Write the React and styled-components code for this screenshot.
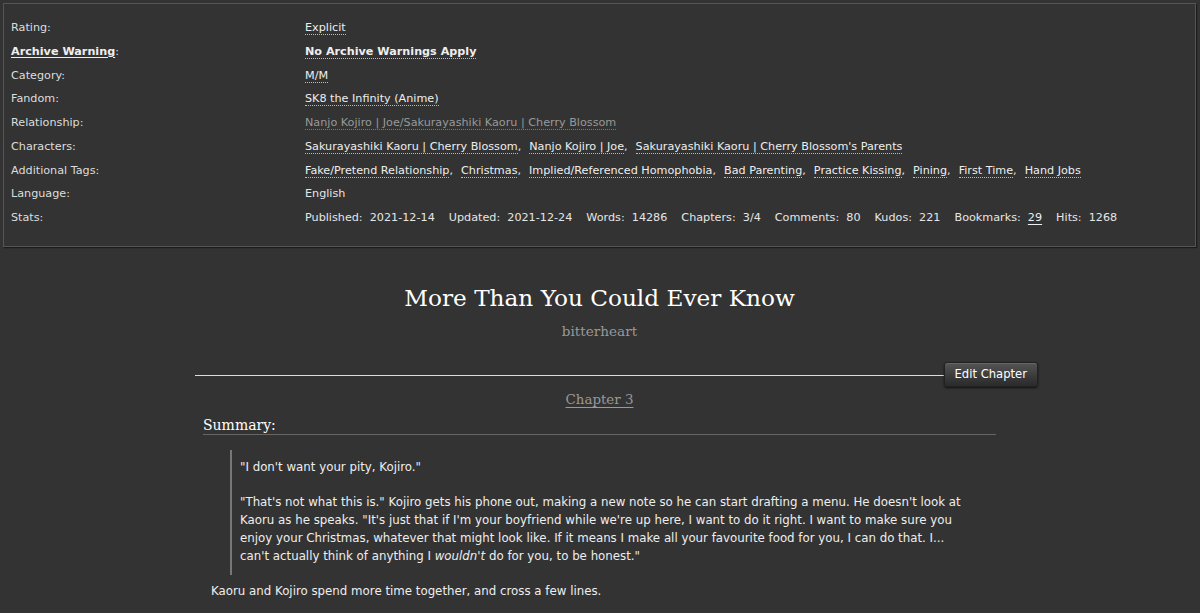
import React from "react";
import styled, { createGlobalStyle } from "styled-components";

const Global = createGlobalStyle`
  html, body { margin: 0; padding: 0; background: #333; }
  body { font-family: "DejaVu Sans", "Noto Sans", sans-serif; color: #ddd; }
  * { box-sizing: border-box; }
`;

const Page = styled.div`
  width: 1200px;
  height: 613px;
  overflow: hidden;
  padding: 3px 4px 0 3px;
`;

const MetaBox = styled.dl`
  margin: 0;
  border: 1px solid #555;
  box-shadow: 1px 1px 1px #1c1c1c;
  height: 244px;
  padding: 12px 8px 0 7px;
  display: grid;
  grid-template-columns: 294px 1fr;
  grid-auto-rows: 23.75px;
  font-size: 11.2px;
  align-content: start;
`;

const Label = styled.dt`
  margin: 0;
  color: #ddd;
  line-height: 23.75px;
  white-space: nowrap;
`;

const HelpLabel = styled.a`
  color: #eee;
  font-weight: bold;
  text-decoration: underline;
  text-underline-offset: 2px;
`;

const Value = styled.dd`
  margin: 0;
  line-height: 23.75px;
  white-space: nowrap;
  color: #e6e6e6;
`;

const Tag = styled.a`
  color: ${(p) => (p.$visited ? "#999" : "#eee")};
  font-weight: ${(p) => (p.$bold ? "bold" : "normal")};
  text-decoration: none;
  border-bottom: 1px dotted ${(p) => (p.$visited ? "#777" : "#bbb")};
`;

const Sep = styled.span`
  margin-right: 8px;
`;

const Stat = styled.span`
  margin-right: 14px;
`;

const StatLink = styled.a`
  color: #eee;
  text-decoration: underline;
  text-underline-offset: 3px;
`;

const Preface = styled.div`
  text-align: center;
  font-family: "DejaVu Serif", Georgia, serif;
  padding-top: 34px;
`;

const Title = styled.h2`
  margin: 0;
  font-weight: normal;
  font-size: 23.2px;
  color: #fff;
  line-height: 34px;
`;

const Byline = styled.h3`
  margin: 6px 0 0 0;
  font-weight: normal;
  font-size: 13.6px;
  color: #999;
  line-height: 20px;
`;

const ChapterWrap = styled.div`
  width: 843px;
  margin: 0 0 0 192px;
`;

const Divider = styled.div`
  display: flex;
  align-items: center;
  margin-top: 21px;
`;

const Rule = styled.div`
  flex: 1;
  height: 1px;
  background: #ddd;
  margin-top: 1px;
`;

const EditButton = styled.a`
  display: inline-block;
  font-size: 11.6px;
  color: #fff;
  padding: 3px 10px 4px;
  border-radius: 3px;
  border: 1px solid #222;
  background: linear-gradient(#555, #3a3a3a 60%, #2a2a2a);
  box-shadow: 0 1px 2px #111, inset 0 1px 0 #666;
  line-height: 16px;
`;

const ChapterTitle = styled.h3`
  margin: 0;
  padding-right: 34px;
  text-align: center;
  font-family: "DejaVu Serif", Georgia, serif;
  font-weight: normal;
  font-size: 13.4px;
  line-height: 26px;
  a {
    color: #999;
    text-decoration: underline;
    text-underline-offset: 3px;
  }
`;

const Summary = styled.div`
  margin: 0 42px 0 8px;
`;

const SummaryHead = styled.h3`
  margin: 3px 0 0 0;
  font-family: "DejaVu Serif", Georgia, serif;
  font-weight: normal;
  font-size: 14px;
  color: #fff;
  line-height: 18px;
  border-bottom: 1px solid #666;
`;

const Quote = styled.blockquote`
  margin: 15px 20px 0 27px;
  border-left: 2px solid #777;
  padding: 8px 0 0 8px;
  font-size: 11.8px;
  line-height: 18px;
  color: #eee;
  p {
    margin: 0 0 17px 0;
  }
  p:last-child { margin-bottom: 0; padding-bottom: 10px; }
`;

const Emph = styled.em`
  font-style: italic;
`;

const After = styled.p`
  margin: 7px 0 0 8px;
  font-size: 11.8px;
  line-height: 18px;
  color: #eee;
`;

const tags = [
  "Fake/Pretend Relationship",
  "Christmas",
  "Implied/Referenced Homophobia",
  "Bad Parenting",
  "Practice Kissing",
  "Pining",
  "First Time",
  "Hand Jobs",
];
const chars = [
  "Sakurayashiki Kaoru | Cherry Blossom",
  "Nanjo Kojiro | Joe",
  "Sakurayashiki Kaoru | Cherry Blossom's Parents",
];

function TagList({ items }) {
  return items.map((t, i) => (
    <React.Fragment key={t}>
      <Tag>{t}</Tag>
      {i < items.length - 1 && <Sep>,</Sep>}
    </React.Fragment>
  ));
}

export default function App() {
  return (
    <Page>
      <Global />
      <MetaBox>
        <Label>Rating:</Label>
        <Value><Tag>Explicit</Tag></Value>
        <Label><HelpLabel>Archive Warning</HelpLabel>:</Label>
        <Value><Tag $bold>No Archive Warnings Apply</Tag></Value>
        <Label>Category:</Label>
        <Value><Tag>M/M</Tag></Value>
        <Label>Fandom:</Label>
        <Value><Tag>SK8 the Infinity (Anime)</Tag></Value>
        <Label>Relationship:</Label>
        <Value><Tag $visited>Nanjo Kojiro | Joe/Sakurayashiki Kaoru | Cherry Blossom</Tag></Value>
        <Label>Characters:</Label>
        <Value><TagList items={chars} /></Value>
        <Label>Additional Tags:</Label>
        <Value><TagList items={tags} /></Value>
        <Label>Language:</Label>
        <Value>English</Value>
        <Label>Stats:</Label>
        <Value>
          <Stat>Published:&nbsp; 2021-12-14</Stat>
          <Stat>Updated:&nbsp; 2021-12-24</Stat>
          <Stat>Words:&nbsp; 14286</Stat>
          <Stat>Chapters:&nbsp; 3/4</Stat>
          <Stat>Comments:&nbsp; 80</Stat>
          <Stat>Kudos:&nbsp; 221</Stat>
          <Stat>Bookmarks:&nbsp; <StatLink>29</StatLink></Stat>
          <Stat>Hits:&nbsp; 1268</Stat>
        </Value>
      </MetaBox>
      <Preface>
        <Title>More Than You Could Ever Know</Title>
        <Byline>bitterheart</Byline>
      </Preface>
      <ChapterWrap>
        <Divider>
          <Rule />
          <EditButton>Edit Chapter</EditButton>
        </Divider>
        <ChapterTitle><a>Chapter 3</a></ChapterTitle>
        <Summary>
          <SummaryHead>Summary:</SummaryHead>
          <Quote>
            <p>"I don't want your pity, Kojiro."</p>
            <p>
              "That's not what this is." Kojiro gets his phone out, making a new note so he can start drafting a menu. He doesn't look at Kaoru as he speaks. "It's just that if I'm your boyfriend while we're up here, I want to do it right. I want to make sure you enjoy your Christmas, whatever that might look like. If it means I make all your favourite food for you, I can do that. I... can't actually think of anything I <Emph>wouldn't</Emph> do for you, to be honest."
            </p>
          </Quote>
          <After>Kaoru and Kojiro spend more time together, and cross a few lines.</After>
        </Summary>
      </ChapterWrap>
    </Page>
  );
}
